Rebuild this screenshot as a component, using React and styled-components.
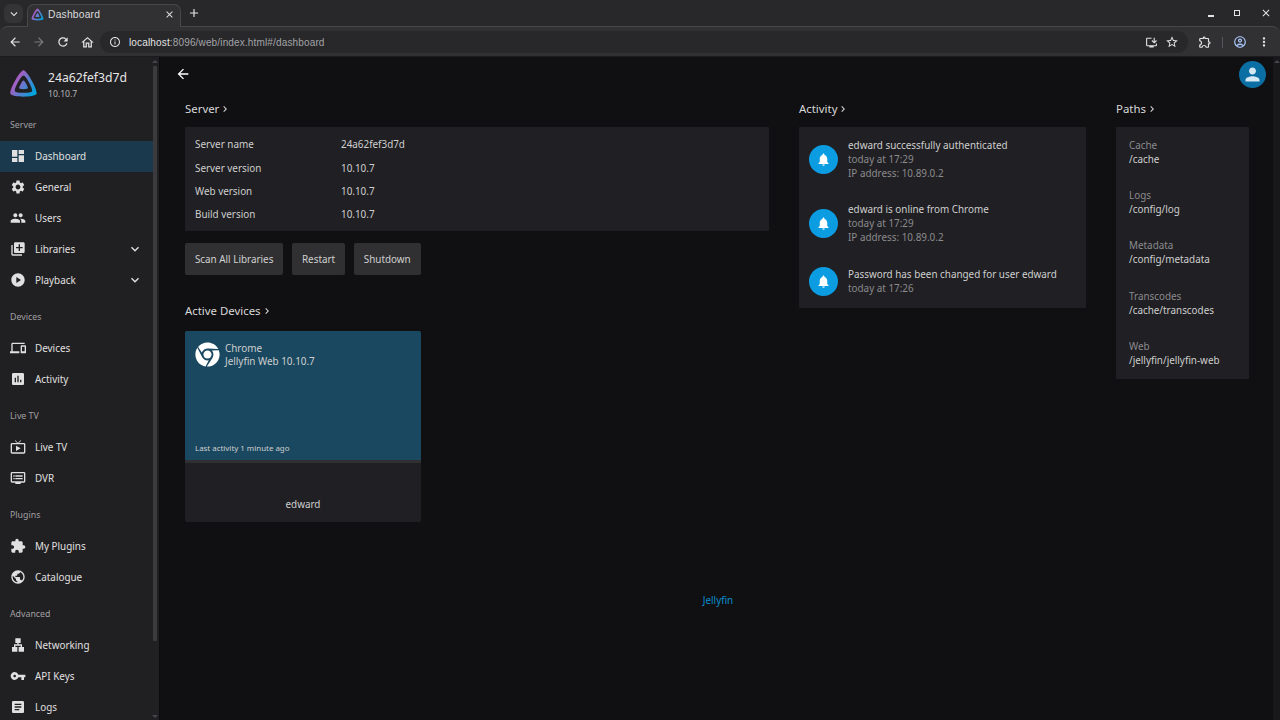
import React from 'react'
import styled, {createGlobalStyle} from 'styled-components'
import {
  MdDashboard, MdSettings, MdPeople, MdLibraryAdd, MdPlayCircle, MdDevices, MdAssessment,
  MdLiveTv, MdDvr, MdExtension, MdPublic, MdLan, MdVpnKey, MdArticle, MdNotifications,
  MdPerson, MdExpandMore, MdArrowBack, MdArrowForward, MdRefresh, MdOutlineHome, MdInfoOutline,
  MdOutlineInstallDesktop, MdStarBorder, MdOutlineExtension, MdOutlineAccountCircle, MdMoreVert,
  MdKeyboardArrowDown, MdAdd, MdClose, MdChevronRight,
} from 'react-icons/md'
import {FaChrome} from 'react-icons/fa'

const GlobalStyle = createGlobalStyle`
  html, body { margin: 0; height: 100%; background: #28282b; overflow: hidden; }
  body { font-family: "Noto Sans", sans-serif; color: #cfcfcf; }
  * { box-sizing: border-box; }
`

function JellyfinLogo({size, id}) {
  return (
    <svg width={size} height={size} viewBox="0 0 512 512">
      <defs>
        <linearGradient id={id} x1="110" y1="213" x2="440" y2="420" gradientUnits="userSpaceOnUse">
          <stop offset="0" stopColor="#aa5cc3" />
          <stop offset="1" stopColor="#00a4dc" />
        </linearGradient>
      </defs>
      <path fill={`url(#${id})`} d="M256 201.6c-20.4 0-86.2 119.3-76.2 139.4s142.5 19.9 152.4 0S276.5 201.6 256 201.6z" />
      <path fill={`url(#${id})`} d="M256 23.3c-61.6 0-259.8 359.4-229.6 420.1s429.3 60 459.2 0S317.6 23.3 256 23.3zM406.5 390.8c-19.6 39.3-281.1 39.8-300.9 0s110.1-275.3 150.4-275.3S426.1 351.4 406.5 390.8z" />
    </svg>
  )
}

const navGroups = [
  {title: 'Server', items: [
    {label: 'Dashboard', Icon: MdDashboard, active: true},
    {label: 'General', Icon: MdSettings},
    {label: 'Users', Icon: MdPeople},
    {label: 'Libraries', Icon: MdLibraryAdd, more: true},
    {label: 'Playback', Icon: MdPlayCircle, more: true},
  ]},
  {title: 'Devices', items: [
    {label: 'Devices', Icon: MdDevices},
    {label: 'Activity', Icon: MdAssessment},
  ]},
  {title: 'Live TV', items: [
    {label: 'Live TV', Icon: MdLiveTv},
    {label: 'DVR', Icon: MdDvr},
  ]},
  {title: 'Plugins', items: [
    {label: 'My Plugins', Icon: MdExtension},
    {label: 'Catalogue', Icon: MdPublic},
  ]},
  {title: 'Advanced', items: [
    {label: 'Networking', Icon: MdLan},
    {label: 'API Keys', Icon: MdVpnKey},
    {label: 'Logs', Icon: MdArticle},
  ]},
]

const serverInfo = [
  ['Server name', '24a62fef3d7d'],
  ['Server version', '10.10.7'],
  ['Web version', '10.10.7'],
  ['Build version', '10.10.7'],
]

const activity = [
  {title: 'edward successfully authenticated', time: 'today at 17:29', ip: 'IP address: 10.89.0.2'},
  {title: 'edward is online from Chrome', time: 'today at 17:29', ip: 'IP address: 10.89.0.2'},
  {title: 'Password has been changed for user edward', time: 'today at 17:26'},
]

const paths = [
  ['Cache', '/cache'],
  ['Logs', '/config/log'],
  ['Metadata', '/config/metadata'],
  ['Transcodes', '/cache/transcodes'],
  ['Web', '/jellyfin/jellyfin-web'],
]

function App() {
  return (
    <Page>
      <GlobalStyle />
      <TabStrip>
        <TabSearch><MdKeyboardArrowDown size={14} /></TabSearch>
        <Tab>
          <JellyfinLogo size={13} id="tabLogo" />
          <TabTitle>Dashboard</TabTitle>
          <MdClose size={11} />
        </Tab>
        <NewTab><MdAdd size={14} /></NewTab>
        <WindowControls>
          <WinMin />
          <WinMax />
          <MdClose size={12} />
        </WindowControls>
      </TabStrip>
      <Toolbar>
        <ToolIcon><MdArrowBack size={14} /></ToolIcon>
        <ToolIcon $dim><MdArrowForward size={14} /></ToolIcon>
        <ToolIcon><MdRefresh size={14} /></ToolIcon>
        <ToolIcon><MdOutlineHome size={15} /></ToolIcon>
        <Omnibox>
          <MdInfoOutline size={12} />
          <Url><b>localhost</b>:8096/web/index.html#/dashboard</Url>
          <MdOutlineInstallDesktop size={13} />
          <MdStarBorder size={14} />
        </Omnibox>
        <ToolRight>
          <MdOutlineExtension size={14} />
          <ToolDivider />
          <MdOutlineAccountCircle size={14} color="#a8c7fa" />
          <MdMoreVert size={14} />
        </ToolRight>
      </Toolbar>
      <Body>
        <Sidebar>
          <Brand>
            <JellyfinLogo size={29} id="brandLogo" />
            <BrandText>
              <BrandName>24a62fef3d7d</BrandName>
              <BrandVersion>10.10.7</BrandVersion>
            </BrandText>
          </Brand>
          {navGroups.map((group) => (
            <NavGroup key={group.title}>
              <NavHeading>{group.title}</NavHeading>
              {group.items.map(({label, Icon, active, more}) => (
                <NavItem key={label} $active={active}>
                  <Icon size={16} />
                  <NavLabel>{label}</NavLabel>
                  {more && <MdExpandMore size={16} />}
                </NavItem>
              ))}
            </NavGroup>
          ))}
        </Sidebar>
        <SideScroll>
          <ScrollArrow />
          <SideThumb />
          <ScrollArrowDown />
        </SideScroll>
        <Main>
          <TopRow>
            <MdArrowBack size={16} color="#fff" />
            <Avatar><MdPerson size={21} /></Avatar>
          </TopRow>
          <Columns>
            <ColumnLeft>
              <SectionTitle>Server<MdChevronRight size={12} /></SectionTitle>
              <InfoCard>
                {serverInfo.map(([name, value]) => (
                  <InfoRow key={name}>
                    <InfoName>{name}</InfoName>
                    <span>{value}</span>
                  </InfoRow>
                ))}
              </InfoCard>
              <Buttons>
                <Button>Scan All Libraries</Button>
                <Button>Restart</Button>
                <Button>Shutdown</Button>
              </Buttons>
              <DevicesTitle>Active Devices<MdChevronRight size={12} /></DevicesTitle>
              <DeviceCard>
                <DeviceTop>
                  <DeviceHead>
                    <FaChrome size={25} color="#fff" />
                    <div>
                      <div>Chrome</div>
                      <div>Jellyfin Web 10.10.7</div>
                    </div>
                  </DeviceHead>
                  <DeviceLast>Last activity 1 minute ago</DeviceLast>
                </DeviceTop>
                <DeviceStrip />
                <DeviceUser>edward</DeviceUser>
              </DeviceCard>
            </ColumnLeft>
            <ColumnActivity>
              <SectionTitle>Activity<MdChevronRight size={12} /></SectionTitle>
              <ActivityCard>
                {activity.map((a) => (
                  <ActivityRow key={a.title}>
                    <Bell><MdNotifications size={15} /></Bell>
                    <div>
                      <div>{a.title}</div>
                      <Muted>{a.time}</Muted>
                      {a.ip && <Muted>{a.ip}</Muted>}
                    </div>
                  </ActivityRow>
                ))}
              </ActivityCard>
            </ColumnActivity>
            <ColumnPaths>
              <SectionTitle>Paths<MdChevronRight size={12} /></SectionTitle>
              <PathsCard>
                {paths.map(([name, value]) => (
                  <PathItem key={name}>
                    <Muted>{name}</Muted>
                    <div>{value}</div>
                  </PathItem>
                ))}
              </PathsCard>
            </ColumnPaths>
          </Columns>
          <Footer>Jellyfin</Footer>
        </Main>
        <MainScroll>
          <ScrollArrow />
        </MainScroll>
      </Body>
    </Page>
  )
}

export default App

const Page = styled.div`
  width: 1280px;
  height: 720px;
  display: flex;
  flex-direction: column;
  overflow: hidden;
`

const TabStrip = styled.div`
  height: 26px;
  background: #28282b;
  display: flex;
  align-items: flex-end;
  padding-left: 4px;
  color: #e3e3e3;
`

const TabSearch = styled.div`
  width: 19px;
  height: 19px;
  margin: 0 4px 3px 0;
  border-radius: 6px;
  background: #343437;
  display: flex;
  align-items: center;
  justify-content: center;
`

const Tab = styled.div`
  position: relative;
  z-index: 1;
  width: 154px;
  height: 23px;
  margin-bottom: -1px;
  background: #313134;
  border: 1px solid #47474a;
  border-bottom: 0;
  border-radius: 7px 7px 0 0;
  display: flex;
  align-items: center;
  gap: 4px;
  padding: 0 5px 4px 3px;
`

const TabTitle = styled.span`
  flex: 1;
  font: 10.3px "Liberation Sans", sans-serif;
  letter-spacing: 0.2px;
  color: #dcdcdc;
`

const NewTab = styled.div`
  width: 24px;
  height: 24px;
  margin: 0 0 1px 1px;
  display: flex;
  align-items: center;
  justify-content: center;
`

const WindowControls = styled.div`
  margin-left: auto;
  height: 26px;
  padding-right: 8px;
  display: flex;
  align-items: center;
  gap: 20px;
`

const WinMin = styled.span`
  width: 6px;
  height: 2px;
  margin-top: 6px;
  background: #e3e3e3;
`

const WinMax = styled.span`
  width: 6px;
  height: 6px;
  border: 1.5px solid #e3e3e3;
`

const Toolbar = styled.div`
  height: 31px;
  background: #313134;
  border-top: 1px solid #47474a;
  border-bottom: 1px solid #1c1c1e;
  border-radius: 8px 8px 0 0;
  display: flex;
  align-items: center;
  padding: 1px 0 0 3px;
  color: #e3e3e3;
`

const ToolIcon = styled.div`
  width: 24px;
  display: flex;
  justify-content: center;
  opacity: ${props => (props.$dim ? 0.4 : 1)};
`

const Omnibox = styled.div`
  margin-left: 1px;
  width: 1088px;
  height: 22px;
  border-radius: 11px;
  background: #28282b;
  display: flex;
  align-items: center;
  gap: 7px;
  padding: 0 9px 0 9px;
`

const Url = styled.span`
  flex: 1;
  margin-left: 1px;
  font: 10px "Liberation Sans", sans-serif;
  letter-spacing: 0.15px;
  color: #a3a3a6;
  b { font-weight: 400; color: #e3e3e3; }
`

const ToolRight = styled.div`
  flex: 1;
  display: flex;
  align-items: center;
  gap: 10px;
  padding-left: 10px;
`

const ToolDivider = styled.span`
  width: 1px;
  height: 11px;
  background: #55555a;
`

const Body = styled.div`
  flex: 1;
  min-height: 0;
  display: flex;
`

const Sidebar = styled.nav`
  width: 153px;
  flex: none;
  background: #201f22;
  overflow: hidden;
`

const SideScroll = styled.div`
  width: 7px;
  flex: none;
  background: #201f22;
  border-right: 1px solid #0c0c0e;
  padding: 3px 2px 0 0;
  display: flex;
  flex-direction: column;
  align-items: center;
`

const SideThumb = styled.div`
  width: 4px;
  height: 575px;
  margin: 3px 0 74px;
  background: #3b3b3e;
  border-radius: 1px;
`

const Brand = styled.div`
  height: 52px;
  padding: 12px 0 0 9px;
  display: flex;
  gap: 10px;
`

const BrandText = styled.div``

const BrandName = styled.div`
  font-size: 12.2px;
  line-height: 18px;
  color: #e6e6e6;
`

const BrandVersion = styled.div`
  font-size: 8.6px;
  line-height: 14px;
  color: #b5b5b5;
`

const NavGroup = styled.div`
  padding-bottom: 5px;
`

const NavHeading = styled.div`
  height: 32px;
  padding: 8px 0 0 10px;
  font-size: 8.8px;
  line-height: 16px;
  color: #a0a0a2;
`

const NavItem = styled.div`
  height: 31px;
  display: flex;
  align-items: center;
  gap: 9px;
  padding: 0 10px 1.5px 10px;
  font-size: 9.88px;
  color: #e0e0e0;
  background: ${props => (props.$active ? '#1a394c' : 'transparent')};
`

const NavLabel = styled.span`
  flex: 1;
`

const Main = styled.main`
  flex: 1;
  min-width: 0;
  background: #100f12;
  padding: 0 17px 0 25px;
  font-size: 9.88px;
  line-height: 14px;
`

const TopRow = styled.div`
  height: 42px;
  display: flex;
  align-items: flex-start;
  justify-content: space-between;
  padding-top: 9px;
  margin-left: -10px;
  margin-right: -10px;
`

const Avatar = styled.div`
  width: 27px;
  height: 27px;
  margin-top: -5px;
  border-radius: 50%;
  background: #0b6fa4;
  color: #d6e8f2;
  display: flex;
  align-items: center;
  justify-content: center;
`

const Columns = styled.div`
  display: flex;
  gap: 30px;
  align-items: flex-start;
`

const ColumnLeft = styled.section`
  width: 584px;
`

const ColumnActivity = styled.section`
  width: 287px;
`

const ColumnPaths = styled.section`
  width: 133px;
`

const SectionTitle = styled.h2`
  margin: 0 0 8px;
  height: 20px;
  display: flex;
  align-items: center;
  font-size: 11.4px;
  font-weight: 400;
  color: #d8d8d8;
`

const DevicesTitle = styled(SectionTitle)`
  margin-top: 26px;
  margin-bottom: 10px;
`

const Card = styled.div`
  background: #201f23;
  border-radius: 1px;
`

const InfoCard = styled(Card)`
  height: 104px;
  padding: 5.8px 10px;
`

const InfoRow = styled.div`
  height: 23.3px;
  display: flex;
  align-items: center;
`

const InfoName = styled.span`
  width: 146px;
`

const Buttons = styled.div`
  margin-top: 12px;
  display: flex;
  gap: 8.8px;
`

const Button = styled.button`
  height: 32px;
  padding: 0 9.9px;
  border: 0;
  border-radius: 2px;
  background: #303033;
  color: #d0d0d0;
  font: 9.88px "Noto Sans", sans-serif;
`

const DeviceCard = styled(Card)`
  width: 236px;
  height: 191px;
  display: flex;
  flex-direction: column;
  border-radius: 2px;
  overflow: hidden;
`

const DeviceTop = styled.div`
  height: 129px;
  background: #1a4860;
  padding: 10px;
  display: flex;
  flex-direction: column;
  justify-content: space-between;
`

const DeviceHead = styled.div`
  display: flex;
  gap: 5px;
  padding-top: 0.5px;
  line-height: 13.5px;
`

const DeviceLast = styled.div`
  font-size: 7.9px;
  line-height: 12px;
  margin-bottom: -4px;
`

const DeviceStrip = styled.div`
  height: 3px;
  background: #303033;
`

const DeviceUser = styled.div`
  flex: 1;
  display: flex;
  align-items: center;
  justify-content: center;
  padding-top: 23px;
`

const ActivityCard = styled(Card)`
  height: 181px;
  padding-top: 11px;
  display: flex;
  flex-direction: column;
  gap: 22.4px;
`

const ActivityRow = styled.div`
  display: flex;
  align-items: center;
  gap: 10px;
  padding-left: 10px;
`

const Bell = styled.div`
  width: 29px;
  height: 29px;
  flex: none;
  border-radius: 50%;
  background: #0b9ce2;
  color: #fff;
  display: flex;
  align-items: center;
  justify-content: center;
`

const Muted = styled.div`
  color: #8b8b8e;
`

const PathsCard = styled(Card)`
  height: 252px;
  padding: 11px 10px 0 13px;
`

const PathItem = styled.div`
  height: 50.2px;
`

const Footer = styled.div`
  margin-top: 71px;
  padding-right: 5px;
  text-align: center;
  color: #0b8fd0;
`

const MainScroll = styled.div`
  width: 7px;
  flex: none;
  background: #18171a;
  display: flex;
  justify-content: center;
  padding-top: 3px;
`

const ScrollArrow = styled.span`
  width: 0;
  height: 0;
  flex: none;
  border-left: 3px solid transparent;
  border-right: 3px solid transparent;
  border-bottom: 3px solid #46464a;
`

const ScrollArrowDown = styled(ScrollArrow)`
  border-bottom: 0;
  border-top: 3px solid #46464a;
`
